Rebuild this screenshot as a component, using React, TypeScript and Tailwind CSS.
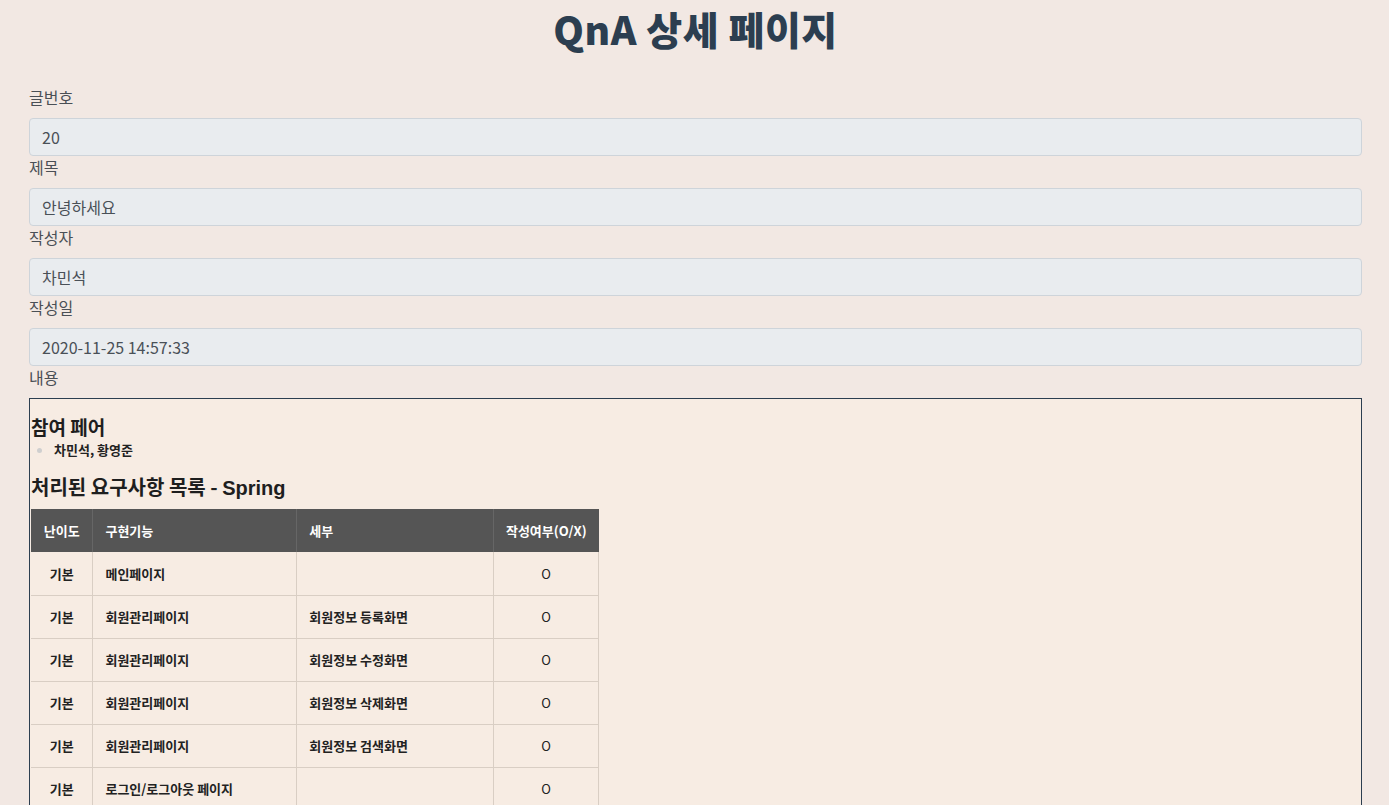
import React from "react";

const fields = [
  { label: "글번호", value: "20" },
  { label: "제목", value: "안녕하세요" },
  { label: "작성자", value: "차민석" },
  { label: "작성일", value: "2020-11-25 14:57:33" },
];

const rows = [
  { level: "기본", feature: "메인페이지", detail: "", done: "O" },
  { level: "기본", feature: "회원관리페이지", detail: "회원정보 등록화면", done: "O" },
  { level: "기본", feature: "회원관리페이지", detail: "회원정보 수정화면", done: "O" },
  { level: "기본", feature: "회원관리페이지", detail: "회원정보 삭제화면", done: "O" },
  { level: "기본", feature: "회원관리페이지", detail: "회원정보 검색화면", done: "O" },
  { level: "기본", feature: "로그인/로그아웃 페이지", detail: "", done: "O" },
];

const font = { fontFamily: '"Noto Sans CJK KR", "Noto Sans", sans-serif' };

export default function App() {
  return (
    <div className="min-h-screen bg-[#f2e8e3] pl-[29px] pr-[27px]" style={font}>
      <h1 className="pt-[2px] text-center text-[39px] leading-[52px] font-black tracking-[0.5px] text-[#2c3e50]">
        QnA 상세 페이지
      </h1>

      <div className="mt-[32px]">
        {fields.map((f) => (
          <div key={f.label}>
            <label className="mb-[10px] block text-[16px] leading-[22px] text-[#4a4f55]">{f.label}</label>
            <div className="flex h-[38px] items-center rounded-[4px] border border-[#ced4da] bg-[#e9ecef] px-[12px] text-[16px] text-[#495057]">
              {f.value}
            </div>
          </div>
        ))}
        <label className="mb-[10px] block text-[16px] leading-[22px] text-[#4a4f55]">내용</label>
      </div>

      <div className="border border-[#2c3e50] bg-[#f7ece3] px-px">
        <h3 className="mt-[16px] text-[19px] leading-[23px] font-bold text-[#1e1e1e]">참여 페어</h3>
        <ul className="mt-[3px] pl-[23px]">
          <li className="flex items-center text-[13px] leading-[18px] font-bold text-[#222]">
            <span className="mr-[12px] -ml-[17px] h-[5px] w-[5px] rounded-full bg-[#cfcfcf]" />
            차민석, 황영준
          </li>
        </ul>
        <h3 className="mt-[16px] text-[20px] leading-[24px] font-bold text-[#1e1e1e]">
          처리된 요구사항 목록 - <span style={{ fontFamily: '"Liberation Sans", sans-serif' }}>Spring</span>
        </h3>
        <table className="mt-[9px] w-[568px] border-collapse text-[13px] text-[#222]">
          <thead>
            <tr className="h-[43px] bg-[#555555] text-white">
              <th className="w-[62px] border-r border-[#666] text-center font-bold">난이도</th>
              <th className="w-[204px] border-r border-[#666] pl-[12px] text-left font-bold">구현기능</th>
              <th className="w-[197px] border-r border-[#666] pl-[12px] text-left font-bold">세부</th>
              <th className="w-[105px] text-center font-bold">작성여부(O/X)</th>
            </tr>
          </thead>
          <tbody>
            {rows.map((r, i) => (
              <tr key={i} className="h-[43px] border-b border-[#d9cec4]">
                <td className="border-r border-[#d9cec4] text-center font-semibold">{r.level}</td>
                <td className="border-r border-[#d9cec4] pl-[12px] font-semibold">{r.feature}</td>
                <td className="border-r border-[#d9cec4] pl-[12px] font-semibold">{r.detail}</td>
                <td className="border-r border-[#d9cec4] text-center">{r.done}</td>
              </tr>
            ))}
          </tbody>
        </table>
      </div>
    </div>
  );
}
